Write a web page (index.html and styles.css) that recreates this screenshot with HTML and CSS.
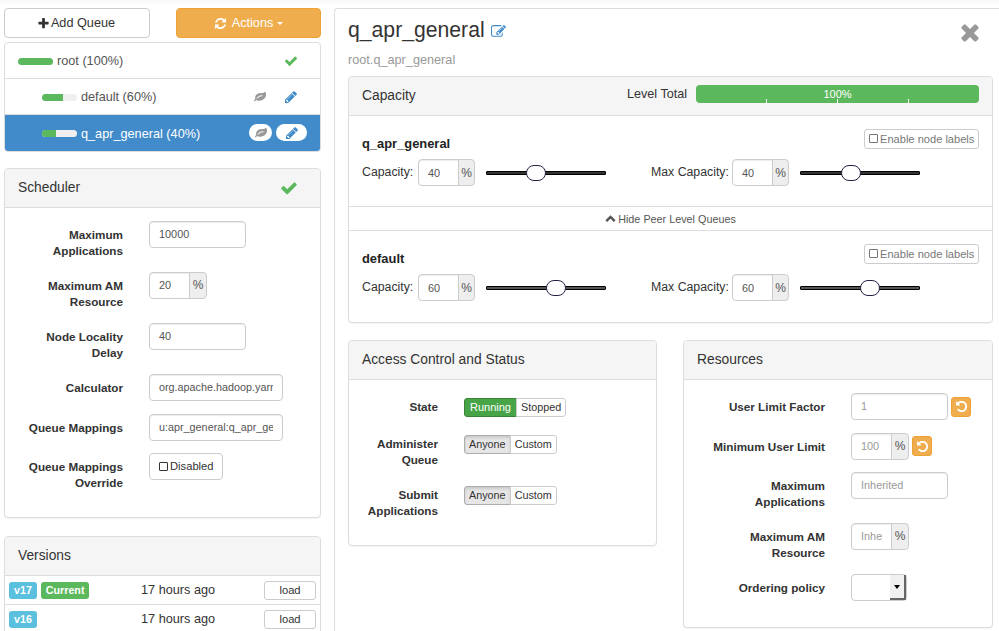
FILE: index.html
```html
<!DOCTYPE html>
<html lang="en">
<head>
  <meta charset="UTF-8" />
  <title>Capacity Scheduler</title>
  <link rel="stylesheet" href="styles.css">
</head>
<body>

  <!-- Icons -->
  <svg class="sprite">
    <symbol id="check" viewBox="0 0 1792 1792"><path d="M1671 566q0 40-28 68l-724 724-136 136q-28 28-68 28t-68-28l-136-136-362-362q-28-28-28-68t28-68l136-136q28-28 68-28t68 28l294 295 656-657q28-28 68-28t68 28l136 136q28 28 28 68z"/></symbol>
    <symbol id="times" viewBox="0 0 1792 1792"><path d="M1490 1322q0 40-28 68l-136 136q-28 28-68 28t-68-28l-294-294-294 294q-28 28-68 28t-68-28l-136-136q-28-28-28-68t28-68l294-294-294-294q-28-28-28-68t28-68l136-136q28-28 68-28t68 28l294 294 294-294q28-28 68-28t68 28l136 136q28 28 28 68t-28 68l-294 294 294 294q28 28 28 68z"/></symbol>
    <symbol id="plus" viewBox="0 0 1792 1792"><path d="M1600 736v192q0 40-28 68t-68 28h-416v416q0 40-28 68t-68 28h-192q-40 0-68-28t-28-68v-416h-416q-40 0-68-28t-28-68v-192q0-40 28-68t68-28h416v-416q0-40 28-68t68-28h192q40 0 68 28t28 68v416h416q40 0 68 28t28 68z"/></symbol>
    <symbol id="pencil" viewBox="0 0 1792 1792"><path d="M491 1536l91-91-235-235-91 91v107h128v128h107zm523-928q0-22-22-22-10 0-17 7l-542 542q-7 7-7 17 0 22 22 22 10 0 17-7l542-542q7-7 7-17zm-54-192l416 416-832 832h-416v-416zm683 96q0 53-37 90l-166 166-416-416 166-165q36-38 90-38 53 0 91 38l235 234q37 39 37 91z"/></symbol>
    <symbol id="refresh" viewBox="0 0 1792 1792"><path d="M1639 1056q0 5-1 7-64 268-268 434.5t-478 166.5q-146 0-282.5-55t-243.5-157l-129 129q-19 19-45 19t-45-19-19-45v-448q0-26 19-45t45-19h448q26 0 45 19t19 45-19 45l-137 137q71 66 161 102t187 36q134 0 250-65t186-179q11-17 53-117 8-23 30-23h192q13 0 22.5 9.5t9.5 22.5zm25-800v448q0 26-19 45t-45 19h-448q-26 0-45-19t-19-45 19-45l138-138q-148-137-349-137-134 0-250 65t-186 179q-11 17-53 117-8 23-30 23h-199q-13 0-22.5-9.5t-9.5-22.5v-7q65-268 270-434.5t480-166.5q146 0 284 55.5t245 156.5l130-129q19-19 45-19t45 19 19 45z"/></symbol>
    <symbol id="undo" viewBox="0 0 1792 1792"><path d="M1664 896q0 156-61 298t-164 245-245 164-298 61q-172 0-327-72.5t-264-204.5q-7-10-6.5-22.5t8.5-20.5l137-138q10-9 25-9 16 2 23 12 73 95 179 147t225 52q104 0 198.5-40.5t163.5-109.5 109.5-163.5 40.5-198.5-40.5-198.5-109.5-163.5-163.5-109.5-198.5-40.5q-98 0-188 35.5t-160 101.5l137 138q31 30 14 69-17 40-59 40h-448q-26 0-45-19t-19-45v-448q0-42 40-59 39-17 69 14l130 129q107-101 244.5-156.5t284.5-55.5q156 0 298 61t245 164 164 245 61 298z"/></symbol>
    <symbol id="edit" viewBox="0 0 1792 1792"><path d="M888 1184l116-116-152-152-116 116v56h96v96h56zm440-720q-16-16-33 1l-350 350q-17 17-1 33t33-1l350-350q17-17 1-33zm80 594v190q0 119-84.5 203.5t-203.5 84.5h-832q-119 0-203.5-84.5t-84.5-203.5v-832q0-119 84.5-203.5t203.5-84.5h832q63 0 117 25 15 7 18 23 3 17-9 29l-49 49q-14 14-32 8-23-6-45-6h-832q-66 0-113 47t-47 113v832q0 66 47 113t113 47h832q66 0 113-47t47-113v-126q0-13 9-22l64-64q15-15 35-7t20 29zm-96-738l288 288-672 672h-288v-288zm444 132l-92 92-288-288 92-92q28-28 68-28t68 28l152 152q28 28 28 68t-28 68z"/></symbol>
    <symbol id="leaf" viewBox="0 0 1792 1792"><path d="M1280 704q0-26-19-45t-45-19q-172 0-318 49.5t-259.5 134-235.5 219.5q-19 21-19 45 0 26 19 45t45 19q24 0 45-19 27-24 74-71t67-66q137-124 268.5-176t313.5-52q26 0 45-19t19-45zm512-198q0 95-20 193-46 224-184.5 383t-357.5 268q-214 108-438 108-148 0-286-47-15-5-88-42t-96-37q-16 0-39.5 32t-45 70-52.5 70-60 32q-43 0-63.5-17.5t-45.5-59.5q-2-4-6-11t-5.5-10-3-9.5-1.5-13.5q0-35 31-73.5t68-65.5 68-56 31-48q0-4-14-38t-16-44q-9-51-9-104 0-115 43.5-220t119-184.5 170.5-139 204-95.5q55-18 145-25.5t179.5-9 178.5-6 163.5-24 113.5-56.5l29.5-29.5 29.5-28 27-20 36.5-16 43.5-4.5q39 0 70.5 46t47.5 112 24 124 8 96z"/></symbol>
    <symbol id="up" viewBox="0 0 10 8"><path d="M1.2 6.3L5 2.5l3.8 3.8" fill="none" stroke="currentColor" stroke-width="2.2"/></symbol>
  </svg>

  <div class="page">
    <div class="side">
      <div class="toolbar">
        <button class="btn add"><svg class="icon"><use href="#plus"/></svg>Add Queue</button>
        <button class="btn actions"><svg class="icon"><use href="#refresh"/></svg>Actions<span class="caret"></span></button>
      </div>

      <div class="queues">
        <div class="queue">
          <span class="bar"><span class="fill" style="width:100%"></span></span>
          <span class="name">root (100%)</span>
          <span class="pill edit green"><svg class="icon"><use href="#check"/></svg></span>
        </div>
        <div class="queue child">
          <span class="bar"><span class="fill" style="width:60%"></span></span>
          <span class="name">default (60%)</span>
          <span class="pill leaf"><svg class="icon"><use href="#leaf"/></svg></span>
          <span class="pill edit"><svg class="icon"><use href="#pencil"/></svg></span>
        </div>
        <div class="queue child active">
          <span class="bar"><span class="fill" style="width:40%"></span></span>
          <span class="name">q_apr_general (40%)</span>
          <span class="pill leaf"><svg class="icon"><use href="#leaf"/></svg></span>
          <span class="pill edit"><svg class="icon"><use href="#pencil"/></svg></span>
        </div>
      </div>

      <div class="panel scheduler">
        <div class="head">Scheduler<svg class="icon ok"><use href="#check"/></svg></div>
        <div class="body">
          <div class="row"><label>Maximum<br>Applications</label><div class="input">10000</div></div>
          <div class="row"><label>Maximum AM<br>Resource</label><div class="input small">20</div><span class="addon">%</span></div>
          <div class="row"><label>Node Locality<br>Delay</label><div class="input">40</div></div>
          <div class="row"><label>Calculator</label><div class="input wide"><span>org.apache.hadoop.yarn</span></div></div>
          <div class="row"><label>Queue Mappings</label><div class="input wide"><span>u:apr_general:q_apr_gen</span></div></div>
          <div class="row"><label>Queue Mappings<br>Override</label><button class="toggle"><span class="box"></span>Disabled</button></div>
        </div>
      </div>

      <div class="panel versions">
        <div class="head">Versions</div>
        <div class="version">
          <div class="tags"><span class="tag">v17</span><span class="tag current">Current</span></div>
          <span class="when">17 hours ago</span>
          <button class="load">load</button>
        </div>
        <div class="version">
          <div class="tags"><span class="tag">v16</span></div>
          <span class="when">17 hours ago</span>
          <button class="load">load</button>
        </div>
      </div>
    </div>

    <div class="main">
      <div class="title">
        <h1>q_apr_general</h1>
        <svg class="icon rename"><use href="#edit"/></svg>
        <svg class="icon close"><use href="#times"/></svg>
      </div>
      <div class="path">root.q_apr_general</div>

      <div class="panel capacity">
        <div class="head">
          <span>Capacity</span>
          <span class="level">Level Total</span>
          <div class="total">100%<i></i><i></i><i></i></div>
        </div>
        <div class="share">
          <div class="share-top"><b>q_apr_general</b><button class="labels"><span class="box"></span>Enable node labels</button></div>
          <div class="controls">
            <span class="cap">Capacity:</span><div class="input small">40</div><span class="addon">%</span>
            <div class="slider"><span class="thumb" style="left:33%"></span></div>
            <span class="maxcap">Max Capacity:</span><div class="input small">40</div><span class="addon">%</span>
            <div class="slider"><span class="thumb" style="left:33.5%"></span></div>
          </div>
        </div>
        <div class="peers"><svg class="icon"><use href="#up"/></svg>Hide Peer Level Queues</div>
        <div class="share">
          <div class="share-top"><b>default</b><button class="labels"><span class="box"></span>Enable node labels</button></div>
          <div class="controls">
            <span class="cap">Capacity:</span><div class="input small">60</div><span class="addon">%</span>
            <div class="slider peer"><span class="thumb" style="left:50%"></span></div>
            <span class="maxcap">Max Capacity:</span><div class="input small">60</div><span class="addon">%</span>
            <div class="slider peer"><span class="thumb" style="left:50%"></span></div>
          </div>
        </div>
      </div>

      <div class="columns">
        <div class="panel access">
          <div class="head">Access Control and Status</div>
          <div class="body">
            <div class="row"><label>State</label><div class="group"><button class="running">Running</button><button>Stopped</button></div></div>
            <div class="row"><label>Administer<br>Queue</label><div class="group"><button class="on">Anyone</button><button>Custom</button></div></div>
            <div class="row"><label>Submit<br>Applications</label><div class="group"><button class="on">Anyone</button><button>Custom</button></div></div>
          </div>
        </div>

        <div class="panel resources">
          <div class="head">Resources</div>
          <div class="body">
            <div class="row"><label>User Limit Factor</label><div class="input muted">1</div><button class="undo"><svg class="icon"><use href="#undo"/></svg></button></div>
            <div class="row"><label>Minimum User Limit</label><div class="input small muted">100</div><span class="addon">%</span><button class="undo"><svg class="icon"><use href="#undo"/></svg></button></div>
            <div class="row"><label>Maximum<br>Applications</label><div class="input muted">Inherited</div></div>
            <div class="row"><label>Maximum AM<br>Resource</label><div class="input small muted"><span>Inhe</span></div><span class="addon">%</span></div>
            <div class="row"><label>Ordering policy</label><div class="select"><span class="arrow"></span></div></div>
          </div>
        </div>
      </div>
    </div>
  </div>

</body>
</html>
```
FILE: styles.css
```css
* {
  box-sizing: border-box;
}
html, body {
  margin: 0;
  height: 631px;
  overflow: hidden;
}
body {
  font-family: "Liberation Sans", Arial, sans-serif;
  font-size: 12.7px;
  line-height: 16px;
  color: #333;
  background: linear-gradient(#f8f8f8, #fff 6px);
}
button {
  font-family: inherit;
  padding: 0;
  color: #333;
  background-color: #fff;
  border: 1px solid #ccc;
}
.sprite {
  position: absolute;
  width: 0;
  height: 0;
}
.icon {
  width: 13px;
  height: 13px;
  fill: currentColor;
  flex: none;
}
.page {
  display: flex;
  padding: 8px 0 0 4px;
}
.side {
  width: 317px;
  flex: none;
}

/* Queue list */
.toolbar {
  display: flex;
  justify-content: space-between;
}
.btn {
  display: flex;
  align-items: center;
  justify-content: center;
  width: 146px;
  height: 30px;
  font-size: 12.7px;
  border-radius: 4px;
}
.add .icon {
  margin-right: 1px;
}
.add {
  padding-right: 2px;
}
.actions {
  width: 145px;
  color: #fff;
  background-color: #f0ad4e;
  border-color: #eea236;
}
.actions .icon {
  margin-right: 5px;
}
.caret {
  margin: 1px 0 0 4px;
  border: 3.5px solid transparent;
  border-top-color: #fff;
  border-bottom: 0;
}
.queues {
  margin-top: 4px;
  border: 1px solid #ddd;
  border-radius: 4px;
  overflow: hidden;
}
.queue {
  display: flex;
  align-items: center;
  height: 36px;
  padding: 0 14px 0 13px;
  color: #555;
  border-bottom: 1px solid #ddd;
}
.queue.child {
  padding-left: 37px;
}
.queue.active {
  color: #fff;
  background-color: #428bca;
  margin: 0 -1px -1px;
  height: 37px;
  padding: 0 14px 0 38px;
  border: 0;
}
.bar {
  width: 35px;
  height: 7px;
  margin: 1px 4px 0 0;
  border-radius: 4px;
  overflow: hidden;
  background-color: #f0f0f0;
}
.active .bar {
  margin-top: 0;
}
.fill {
  display: block;
  height: 7px;
  background-color: #5cb85c;
}
.name {
  flex: 1;
}
.pill {
  display: flex;
  align-items: center;
  justify-content: center;
  height: 17px;
  border-radius: 9px;
}
.active .pill {
  background-color: #fff;
}
.active .pill {
  margin-bottom: 2px;
}
.pill.leaf {
  width: 23px;
  margin-right: 4px;
  color: #999;
}
.pill.leaf .icon {
  width: 12px;
  height: 12px;
}
.pill.edit {
  width: 31px;
  color: #428bca;
}
.pill.edit .icon {
  width: 14px;
  height: 14px;
}
.pill.edit.green {
  color: #5cb85c;
}

/* Panels */
.panel {
  background-color: #fff;
  border: 1px solid #ddd;
  border-radius: 4px;
  box-shadow: 0 1px 1px rgba(0,0,0,0.05);
}
.head {
  display: flex;
  align-items: center;
  height: 39px;
  padding: 0 13px;
  font-size: 13.8px;
  background-color: #f5f5f5;
  border-bottom: 1px solid #ddd;
  border-radius: 3px 3px 0 0;
}
.body {
  padding: 13px 0 0;
}
.row {
  display: flex;
  margin-bottom: 12.5px;
}
label {
  padding: 6px 0 0.5px;
  text-align: right;
  font-size: 11.7px;
  font-weight: bold;
}
.scheduler {
  height: 350px;
  margin-top: 16px;
}
.scheduler label {
  width: 118px;
  margin-right: 26px;
}
.ok {
  width: 18px;
  height: 18px;
  margin: 0 9px 0 auto;
  color: #5cb85c;
}
.input, .addon, .toggle {
  height: 27px;
  border: 1px solid #ccc;
  border-radius: 4px;
  font-size: 10.9px;
  line-height: 24px;
}
.input {
  width: 97px;
  padding: 0 9px;
  color: #555;
  background-color: #fff;
  box-shadow: inset 0 1px 1px rgba(0,0,0,0.075);
}
.input span {
  display: block;
  overflow: hidden;
  white-space: nowrap;
}
.input.small {
  width: 41px;
  border-radius: 4px 0 0 4px;
}
.input.wide {
  width: 134px;
  font-size: 10.8px;
}
.input.muted {
  color: #999;
}
.addon {
  width: 18px;
  margin-left: -1px;
  text-align: center;
  font-size: 12px;
  line-height: 25px;
  color: #555;
  background-color: #eee;
  border-radius: 0 4px 4px 0;
}
.toggle {
  display: flex;
  align-items: center;
  width: 74px;
  padding: 0 0 1px 9px;
  font-size: 11.2px;
}
.box {
  width: 9px;
  height: 9px;
  margin-right: 2px;
  border: 1px solid currentColor;
  border-radius: 1px;
}

/* Versions */
.versions {
  margin-top: 18px;
}
.version {
  display: flex;
  align-items: center;
  height: 29px;
  padding: 0 4px;
  border-bottom: 1px solid #ddd;
}
.versions .head {
  padding-bottom: 1px;
}
.tags {
  display: flex;
  width: 132px;
  gap: 4px;
}
.tag {
  height: 17px;
  padding: 0 5px;
  line-height: 17px;
  font-size: 10.7px;
  font-weight: bold;
  color: #fff;
  background-color: #5bc0de;
  border-radius: 3px;
}
.current {
  background-color: #5cb85c;
}
.load {
  width: 52px;
  height: 19px;
  margin-left: auto;
  font-size: 11.2px;
  line-height: 16px;
  border-radius: 3px;
}

/* Selected queue */
.main {
  width: 665px;
  height: 640px;
  margin-left: 13px;
  padding: 0 6px 0 13px;
  flex: none;
  border: 1px solid #ddd;
  border-right: 0;
  border-radius: 4px 0 0 0;
  background-color: #fff;
}
.title {
  display: flex;
  align-items: center;
  height: 43px;
}
h1 {
  margin: 0 6px 2px 0;
  font-size: 21.2px;
  font-weight: normal;
  line-height: 24px;
}
.rename {
  width: 15px;
  height: 15px;
  margin-top: 2px;
  color: #428bca;
}
.close {
  width: 26px;
  height: 26px;
  margin: 3px 10px 0 auto;
  color: #999;
}
.path {
  height: 24px;
  color: #999;
}
.level {
  margin: -4px 9px 0 auto;
  font-size: 12.6px;
}
.total {
  position: relative;
  width: 283px;
  height: 18px;
  margin-top: -4px;
  text-align: center;
  font-size: 11px;
  line-height: 19px;
  color: #fff;
  background-color: #5cb85c;
  border-radius: 4px;
}
/* quarter marks */
.total i {
  position: absolute;
  bottom: 0;
  left: 24.8%;
  width: 1px;
  height: 4px;
  background-color: #fff;
}
.total i:nth-child(2) {
  left: 49.8%;
}
.total i:nth-child(3) {
  left: 74.8%;
}
.share {
  height: 90px;
  padding: 12.5px 13px 0;
}
.share-top {
  display: flex;
  justify-content: space-between;
  height: 30.5px;
}
.share-top b {
  padding-top: 7.5px;
  font-size: 12.9px;
  color: #222;
}
.labels {
  display: flex;
  align-items: center;
  width: 115px;
  height: 20px;
  padding-left: 4px;
  font-size: 11.1px;
  line-height: 16px;
  color: #777;
  border-radius: 3px;
  white-space: nowrap;
}
.controls {
  display: flex;
}
.cap, .maxcap {
  width: 56px;
  padding-top: 4.5px;
  font-size: 12.3px;
  white-space: nowrap;
}
.maxcap {
  width: 81px;
  margin-left: 45px;
}
.controls .input {
  line-height: 26px;
}
.controls .addon {
  width: 17px;
  line-height: 26px;
}
.slider {
  position: relative;
  width: 120px;
  height: 4px;
  margin: 12px 0 0 11px;
  background-color: #333;
  border: 1px solid #000;
  border-radius: 1px;
}
.slider.peer {
  background-color: #555;
}
.thumb {
  position: absolute;
  top: -7px;
  width: 20px;
  height: 16px;
  background-color: #fff;
  border: 1px solid #224;
  border-radius: 8px;
}
.peers {
  display: flex;
  align-items: center;
  justify-content: center;
  height: 25px;
  font-size: 10.8px;
  color: #555;
  border: solid #ddd;
  border-width: 1px 0;
}
.peers .icon {
  width: 11px;
  height: 9px;
  margin-right: 2px;
}
.capacity {
  height: 247px;
}
.columns {
  display: flex;
  align-items: flex-start;
  justify-content: space-between;
  margin-top: 17px;
}
.access {
  width: 309px;
  height: 206px;
}
.access label {
  width: 89px;
  margin-right: 26px;
}
.resources {
  width: 310px;
  height: 288px;
}
.resources label {
  width: 141px;
  margin-right: 26px;
}
.group {
  display: flex;
  height: 19px;
  margin-top: 5px;
}
.group button {
  height: 19px;
  padding: 0 4px;
  font-size: 10.8px;
  line-height: 15px;
  border-radius: 0 3px 3px 0;
  margin-left: -1px;
}
.group button:first-child {
  margin-left: 0;
  padding: 0 5px;
  border-radius: 3px 0 0 3px;
}
.group .running {
  font-size: 11px;
  color: #fff;
  background-color: #47a447;
  border-color: #398439;
}
.group .on:first-child {
  padding: 0 4px;
  background-color: #e6e6e6;
  border-color: #adadad;
  box-shadow: inset 0 2px 3px rgba(0,0,0,0.125);
}
.undo {
  display: flex;
  align-items: center;
  justify-content: center;
  width: 20px;
  height: 20px;
  margin: 3.5px 0 0 3px;
  color: #fff;
  background-color: #f0ad4e;
  border-color: #eea236;
  border-radius: 3px;
}
.undo .icon {
  width: 13px;
  height: 13px;
}
.select {
  display: flex;
  justify-content: flex-end;
  width: 56px;
  height: 27px;
  border: 1px solid #ccc;
  border-radius: 4px;
}
.arrow {
  display: flex;
  align-items: center;
  justify-content: center;
  width: 16px;
  height: 25px;
  background-color: #f0f0f0;
  border: solid #666;
  border-width: 0 2px 2px 0;
}
.arrow::after {
  content: "";
  border: 3.5px solid transparent;
  border-top: 4px solid #000;
  border-bottom: 0;
}
```
